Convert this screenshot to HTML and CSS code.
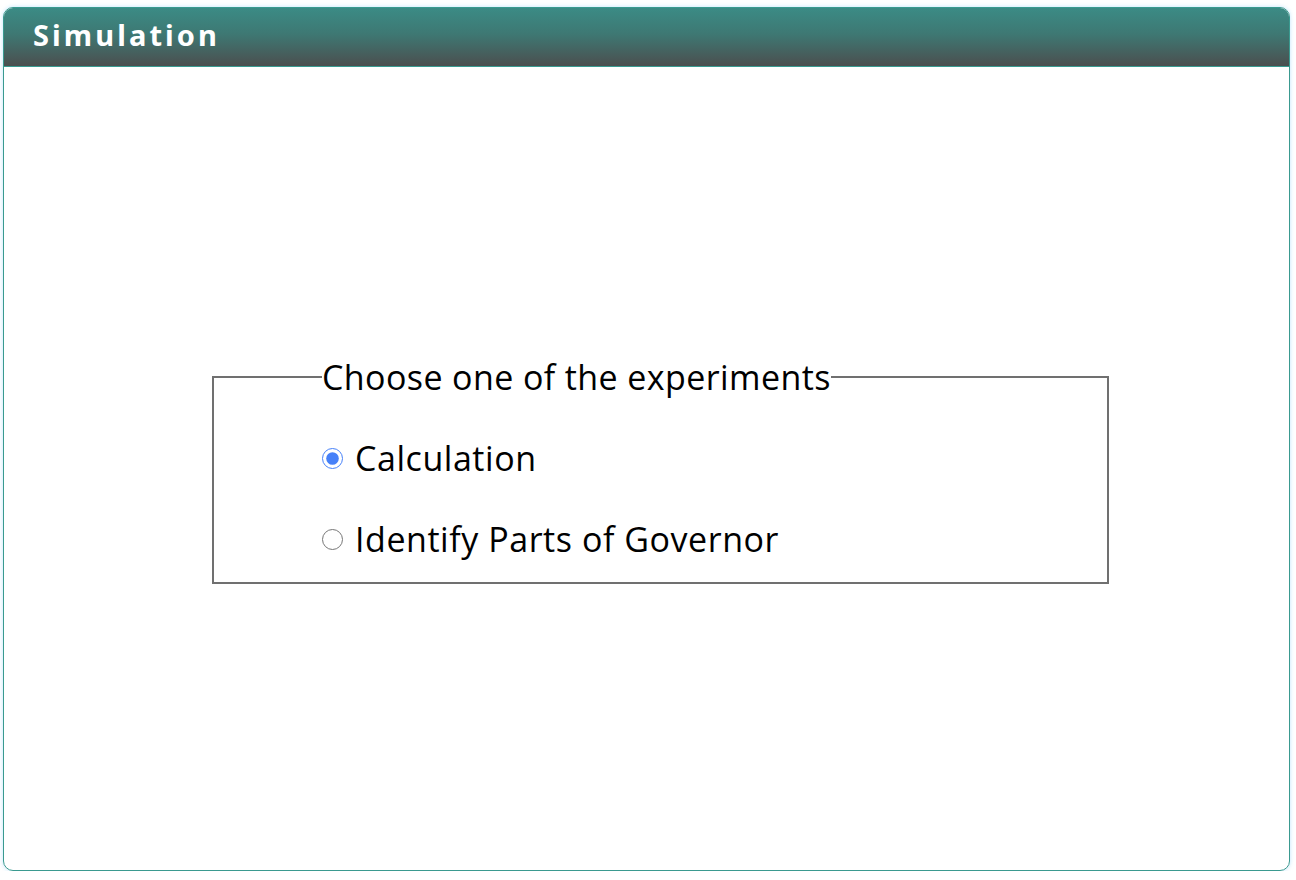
FILE: index.html
```html
<!DOCTYPE html>
<html>
<head>
<meta charset="utf-8">
<title>Simulation</title>
<link rel="stylesheet" href="styles.css">
</head>
<body>
<div class="card">
  <div class="card-header">
    <h1 class="title">Simulation</h1>
  </div>
  <div class="card-body">
    <fieldset class="choices">
      <legend class="choices-legend">Choose one of the experiments</legend>
      <label class="option">
        <input type="radio" name="exp" class="radio" checked>
        <span>Calculation</span>
      </label>
      <label class="option">
        <input type="radio" name="exp" class="radio">
        <span>Identify Parts of Governor</span>
      </label>
    </fieldset>
  </div>
</div>
</body>
</html>
```

FILE: styles.css
```css
html, body {
  margin: 0;
  padding: 0;
  background: #ffffff;
}

body {
  padding: 7px 6px 0 3px;
  font-family: "Open Sans", "Noto Sans", sans-serif;
}

.card {
  height: 862px;
  border: 1px solid #3a9a90;
  border-radius: 10px;
  overflow: hidden;
  display: flex;
  flex-direction: column;
  box-shadow: 0 0 4px rgba(150, 210, 250, 0.6);
}

.card-header {
  height: 59px;
  box-sizing: border-box;
  flex: none;
  background: linear-gradient(to bottom, #3b8b85 0%, #3e7873 45%, #4b4f4f 100%);
  border-bottom: 1px solid #3a9a90;
  display: flex;
  align-items: center;
  padding: 0 0 5px 29px;
}

.title {
  margin: 0;
  color: #ffffff;
  font-family: "Noto Sans", sans-serif;
  font-weight: 700;
  font-size: 29px;
  letter-spacing: 3.1px;
}

.card-body {
  flex: 1;
  display: flex;
  flex-direction: column;
  justify-content: center;
  align-items: flex-start;
  padding-top: 6px;
}

.choices {
  width: 897px;
  box-sizing: border-box;
  margin: 0 0 0 208px;
  border: 2px solid #707070;
  padding: 44px 0 22px 108px;
  display: flex;
  flex-direction: column;
  gap: 40px;
}

.choices-legend {
  padding: 0;
  font-size: 34px;
  letter-spacing: 0.4px;
  color: #000;
  line-height: 1;
}

.option {
  display: flex;
  align-items: center;
  font-size: 34px;
  letter-spacing: 0.55px;
  color: #000;
  line-height: 41px;
}

.radio {
  width: 21px;
  height: 21px;
  margin: 0 12px 0 0;
  accent-color: #4680f8;
}
```
